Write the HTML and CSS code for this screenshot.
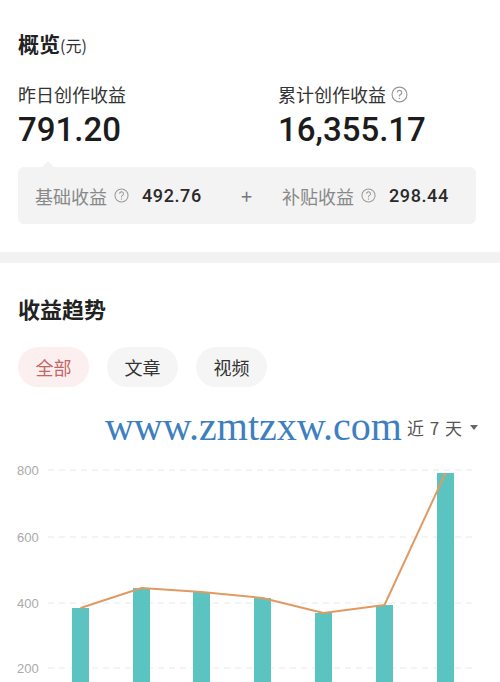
FILE: index.html
```html
<!DOCTYPE html>
<html lang="zh-CN">

<head>
    <meta charset="UTF-8">
    <title>收益概览</title>
    <link rel="stylesheet" href="styles.css">
</head>

<body>
    <div class="overview">
        <h2 class="title">概览<span class="unit">(元)</span></h2>
        <div class="stats">
            <div class="stat">
                <div class="label">昨日创作收益</div>
                <div class="num">791.20</div>
            </div>
            <div class="stat">
                <div class="label">累计创作收益
                    <svg class="help big" viewBox="0 0 16 16"><circle cx="8" cy="8" r="7" /><path d="M5.9 6.2a2.1 2.1 0 1 1 3 1.9c-.6.3-.9.7-.9 1.3v.5" /><circle class="dot" cx="8" cy="11.7" r=".7" /></svg>
                </div>
                <div class="num">16,355.17</div>
            </div>
        </div>
        <div class="breakdown">
            <div class="part first">
                <span class="name">基础收益</span>
                <svg class="help" viewBox="0 0 16 16"><circle cx="8" cy="8" r="7" /><path d="M5.9 6.2a2.1 2.1 0 1 1 3 1.9c-.6.3-.9.7-.9 1.3v.5" /><circle class="dot" cx="8" cy="11.7" r=".7" /></svg>
                <span class="val">492.76</span>
            </div>
            <div class="plus">+</div>
            <div class="part">
                <span class="name">补贴收益</span>
                <svg class="help" viewBox="0 0 16 16"><circle cx="8" cy="8" r="7" /><path d="M5.9 6.2a2.1 2.1 0 1 1 3 1.9c-.6.3-.9.7-.9 1.3v.5" /><circle class="dot" cx="8" cy="11.7" r=".7" /></svg>
                <span class="val">298.44</span>
            </div>
        </div>
    </div>
    <div class="sep"></div>
    <div class="trend">
        <h2 class="title">收益趋势</h2>
        <div class="tabs">
            <span class="tab active">全部</span>
            <span class="tab">文章</span>
            <span class="tab">视频</span>
        </div>
        <div class="range-row">
            <span class="mark">www.zmtzxw.com</span>
            <span class="range">近 7 天<i class="caret"></i></span>
        </div>
        <svg class="chart" viewBox="0 0 500 235" width="500" height="235">
            <g class="grid">
                <line x1="48" y1="23" x2="474" y2="23" />
                <line x1="48" y1="90" x2="474" y2="90" />
                <line x1="48" y1="156" x2="474" y2="156" />
                <line x1="48" y1="221" x2="474" y2="221" />
            </g>
            <g class="axis">
                <text x="17" y="28">800</text>
                <text x="17" y="95">600</text>
                <text x="17" y="161">400</text>
                <text x="17" y="226">200</text>
            </g>
            <g class="bars">
                <rect x="72" y="161" width="17" height="130" />
                <rect x="133" y="141" width="17" height="150" />
                <rect x="193" y="145" width="17" height="146" />
                <rect x="254" y="151" width="17" height="140" />
                <rect x="315" y="166" width="17" height="125" />
                <rect x="376" y="158" width="17" height="133" />
                <rect x="437" y="26" width="17" height="265" />
            </g>
            <polyline class="line" points="80.5,161 141.5,141 201.5,145 262.5,151 323.5,166 384.5,158 445.5,26" />
        </svg>
    </div>
</body>

</html>
```

FILE: styles.css
```css
* {
    margin: 0;
    padding: 0;
    box-sizing: border-box;
}

body {
    width: 500px;
    height: 682px;
    overflow: hidden;
    background: #fff;
    color: #222;
    font-family: "Noto Sans CJK SC", "Noto Sans", sans-serif;
}

.overview {
    height: 252px;
    padding: 30px 18px 0;
}

.title {
    font-size: 21px;
    line-height: 26px;
    font-weight: 600;
    color: #222;
}

.title .unit {
    font-size: 16px;
    font-weight: 400;
    color: #333;
}

.stats {
    display: grid;
    grid-template-columns: 260px 1fr;
    margin-top: 24px;
}

.label {
    font-size: 18px;
    line-height: 24px;
    color: #333;
    display: flex;
    align-items: center;
}

.num {
    margin-top: 4px;
    font-family: Roboto, "Noto Sans", sans-serif;
    font-size: 33px;
    line-height: 40px;
    font-weight: 500;
    color: #1c1c1c;
}

.help {
    width: 15px;
    height: 15px;
    fill: none;
    stroke: #999;
    stroke-width: 1.1;
}

.help .dot {
    fill: #999;
    stroke: none;
}

.help.big {
    width: 17px;
    height: 17px;
    margin-left: 5px;
}

.breakdown {
    position: relative;
    margin: 17px 6px 0 0;
    height: 57px;
    background: #f3f3f3;
    border-radius: 6px;
    display: flex;
    align-items: center;
}

.breakdown::before {
    content: "";
    position: absolute;
    left: 24px;
    top: -6px;
    border-left: 6px solid transparent;
    border-right: 6px solid transparent;
    border-bottom: 6px solid #f3f3f3;
}

.part {
    display: flex;
    align-items: center;
}

.part.first {
    margin-left: 17px;
    width: 206px;
}

.name {
    font-size: 18px;
    color: #888;
}

.part .help {
    margin: 0 13px 0 7px;
}

.val {
    font-family: Roboto, "Noto Sans", sans-serif;
    font-size: 18px;
    font-weight: 500;
    letter-spacing: 0.6px;
    color: #2a2a2a;
}

.plus {
    width: 41px;
    font-size: 20px;
    color: #777;
}

.sep {
    height: 11px;
    background: #f2f2f2;
}

.trend {
    padding: 31px 0 0;
}

.trend .title {
    margin-left: 18px;
    font-size: 22px;
    line-height: 28px;
}

.tabs {
    display: flex;
    gap: 18px;
    margin: 25px 0 0 18px;
}

.tab {
    width: 71px;
    height: 40px;
    border-radius: 20px;
    background: #f5f5f5;
    color: #333;
    font-size: 18px;
    display: flex;
    align-items: center;
    justify-content: center;
}

.tab.active {
    background: #fcefef;
    color: #c46566;
}

.range-row {
    margin-top: 20px;
    height: 40px;
    display: flex;
    align-items: center;
    justify-content: flex-end;
    padding-right: 22px;
}

.mark {
    font-family: "Liberation Serif", serif;
    font-size: 40px;
    color: #3d7fc0;
    margin-right: 5px;
    line-height: 40px;
}

.range {
    font-size: 17px;
    color: #555;
    display: flex;
    align-items: center;
    word-spacing: 2px;
}

.caret {
    margin-left: 8px;
    border-left: 4px solid transparent;
    border-right: 4px solid transparent;
    border-top: 5px solid #666;
}

.chart {
    display: block;
}

.grid line {
    stroke: #e8e8e8;
    stroke-width: 1;
    stroke-dasharray: 6 5;
}

.axis text {
    font-family: "Liberation Sans", sans-serif;
    font-size: 13px;
    fill: #aaa;
}

.bars rect {
    fill: #5bc4c0;
}

.line {
    fill: none;
    stroke: #e09a63;
    stroke-width: 2;
    stroke-linejoin: round;
}
```
